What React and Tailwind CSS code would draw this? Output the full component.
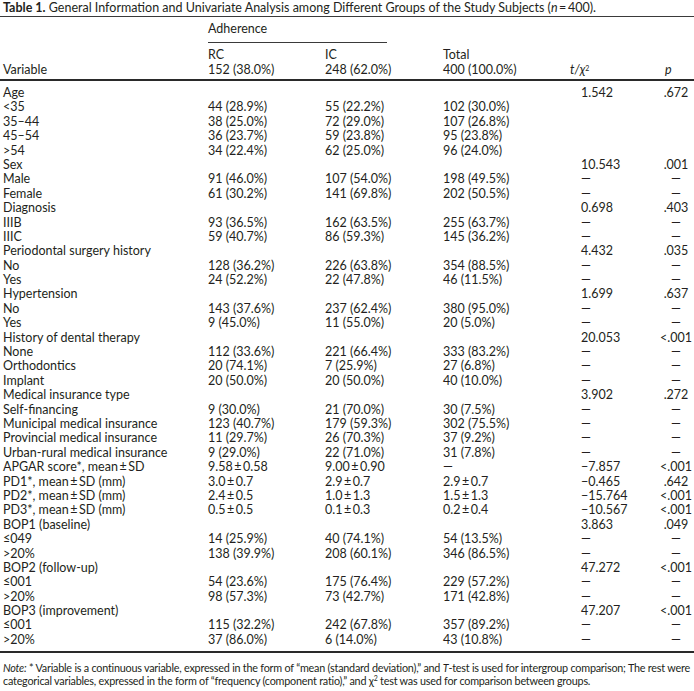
const rows = [
  ['Age', '', '', '', '1.542', '.672'],
  ['<35', '44 (28.9%)', '55 (22.2%)', '102 (30.0%)', '', ''],
  ['35–44', '38 (25.0%)', '72 (29.0%)', '107 (26.8%)', '', ''],
  ['45–54', '36 (23.7%)', '59 (23.8%)', '95 (23.8%)', '', ''],
  ['>54', '34 (22.4%)', '62 (25.0%)', '96 (24.0%)', '', ''],
  ['Sex', '', '', '', '10.543', '.001'],
  ['Male', '91 (46.0%)', '107 (54.0%)', '198 (49.5%)', '—', '—'],
  ['Female', '61 (30.2%)', '141 (69.8%)', '202 (50.5%)', '—', '—'],
  ['Diagnosis', '', '', '', '0.698', '.403'],
  ['IIIB', '93 (36.5%)', '162 (63.5%)', '255 (63.7%)', '—', '—'],
  ['IIIC', '59 (40.7%)', '86 (59.3%)', '145 (36.2%)', '—', '—'],
  ['Periodontal surgery history', '', '', '', '4.432', '.035'],
  ['No', '128 (36.2%)', '226 (63.8%)', '354 (88.5%)', '—', '—'],
  ['Yes', '24 (52.2%)', '22 (47.8%)', '46 (11.5%)', '—', '—'],
  ['Hypertension', '', '', '', '1.699', '.637'],
  ['No', '143 (37.6%)', '237 (62.4%)', '380 (95.0%)', '—', '—'],
  ['Yes', '9 (45.0%)', '11 (55.0%)', '20 (5.0%)', '—', '—'],
  ['History of dental therapy', '', '', '', '20.053', '<.001'],
  ['None', '112 (33.6%)', '221 (66.4%)', '333 (83.2%)', '—', '—'],
  ['Orthodontics', '20 (74.1%)', '7 (25.9%)', '27 (6.8%)', '—', '—'],
  ['Implant', '20 (50.0%)', '20 (50.0%)', '40 (10.0%)', '—', '—'],
  ['Medical insurance type', '', '', '', '3.902', '.272'],
  ['Self-financing', '9 (30.0%)', '21 (70.0%)', '30 (7.5%)', '—', '—'],
  ['Municipal medical insurance', '123 (40.7%)', '179 (59.3%)', '302 (75.5%)', '—', '—'],
  ['Provincial medical insurance', '11 (29.7%)', '26 (70.3%)', '37 (9.2%)', '—', '—'],
  ['Urban-rural medical insurance', '9 (29.0%)', '22 (71.0%)', '31 (7.8%)', '—', '—'],
  ['APGAR score*, mean\u2009±\u2009SD', '9.58\u2009±\u20090.58', '9.00\u2009±\u20090.90', '—', '−7.857', '<.001'],
  ['PD1*, mean\u2009±\u2009SD (mm)', '3.0\u2009±\u20090.7', '2.9\u2009±\u20090.7', '2.9\u2009±\u20090.7', '−0.465', '.642'],
  ['PD2*, mean\u2009±\u2009SD (mm)', '2.4\u2009±\u20090.5', '1.0\u2009±\u20091.3', '1.5\u2009±\u20091.3', '−15.764', '<.001'],
  ['PD3*, mean\u2009±\u2009SD (mm)', '0.5\u2009±\u20090.5', '0.1\u2009±\u20090.3', '0.2\u2009±\u20090.4', '−10.567', '<.001'],
  ['BOP1 (baseline)', '', '', '', '3.863', '.049'],
  ['≤049', '14 (25.9%)', '40 (74.1%)', '54 (13.5%)', '—', '—'],
  ['>20%', '138 (39.9%)', '208 (60.1%)', '346 (86.5%)', '—', '—'],
  ['BOP2 (follow-up)', '', '', '', '47.272', '<.001'],
  ['≤001', '54 (23.6%)', '175 (76.4%)', '229 (57.2%)', '—', '—'],
  ['>20%', '98 (57.3%)', '73 (42.7%)', '171 (42.8%)', '—', '—'],
  ['BOP3 (improvement)', '', '', '', '47.207', '<.001'],
  ['≤001', '115 (32.2%)', '242 (67.8%)', '357 (89.2%)', '—', '—'],
  ['>20%', '37 (86.0%)', '6 (14.0%)', '43 (10.8%)', '—', '—'],
];

// last column starts at 658 so centred p values sit around x 678
const cols = 'grid grid-cols-[205px_117px_118px_127px_88px_36px] pl-[3px]';

function Row({ cells }) {
  const [name, rc, ic, total, t, p] = cells;
  return (
    <div className={`${cols} h-[14.4px] leading-[14.4px] whitespace-nowrap`}>
      <div>{name}</div>
      <div>{rc}</div>
      <div>{ic}</div>
      <div>{total}</div>
      <div className="pl-[11px]">{t}</div>
      <div className="text-center">{p}</div>
    </div>
  );
}

export default function App() {
  return (
    <div className="w-[694px] h-[691px] overflow-hidden bg-white text-[#231f20] text-[12.5px] font-['Lato',sans-serif]">
      <div className="pl-[3px] pt-px h-[16px] leading-[14px] whitespace-nowrap">
        <span className="font-bold">Table 1.</span>{' '}
        General Information and Univariate Analysis among Different Groups of the Study Subjects (<i>n</i>{'\u2009=\u2009'}400).
      </div>
      <div className="h-px bg-[#3a3a3a]" />

      <div className={`${cols} pt-[5px] h-[25px] leading-[14px]`}>
        <div />
        <div className="col-span-2">Adherence</div>
      </div>
      <div className={cols}>
        <div />
        <div className="col-span-2 h-px w-[179px] bg-[#3a3a3a]" />
      </div>

      <div className={`${cols} pt-[4px] leading-[15px] whitespace-nowrap`}>
        <div className="pt-[15px]">Variable</div>
        <div>RC<br />152 (38.0%)</div>
        <div>IC<br />248 (62.0%)</div>
        <div>Total<br />400 (100.0%)</div>
        <div className="pt-[15px] italic">t/χ<sup className="text-[7px] not-italic">2</sup></div>
        <div className="pt-[15px] pl-[7px] italic">p</div>
      </div>
      <div className="mt-[2px] h-[2px] bg-[#2a2a2a]" />

      <div className="pt-[5px] pb-[4px]">
        {rows.map((r, i) => (
          <Row key={i} cells={r} />
        ))}
      </div>
      <div className="h-[2px] bg-[#2a2a2a]" />

      <div className="pl-[3px] pt-[9px] text-[10.8px] tracking-[-0.22px] leading-[12.5px] whitespace-nowrap">
        <i>Note:</i> * Variable is a continuous variable, expressed in the form of “mean (standard deviation),” and <i>T</i>-test is used for intergroup comparison; The rest were
        <br />
        categorical variables, expressed in the form of “frequency (component ratio),” and χ<sup className="text-[7px]">2</sup> test was used for comparison between groups.
      </div>
    </div>
  );
}
